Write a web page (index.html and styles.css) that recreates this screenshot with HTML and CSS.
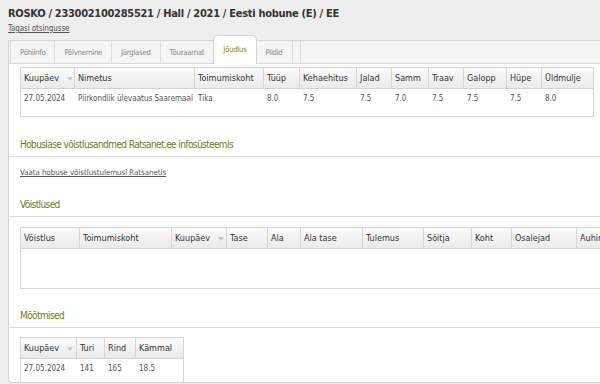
FILE: index.html
```html
<!DOCTYPE html>
<html lang="et">
<head>
  <meta charset="UTF-8">
  <title>ROSKO - Jõudlus</title>
  <link rel="stylesheet" href="styles.css">
</head>
<body>
  <header class="page-head">
    <h1>ROSKO / 233002100285521 / Hall / 2021 / Eesti hobune (E) / EE</h1>
    <a href="#" class="back">Tagasi otsingusse</a>
  </header>

  <div class="tabs-box">
    <ul class="tabs">
      <li>Põhiinfo</li>
      <li>Põlvnemine</li>
      <li>Järglased</li>
      <li>Tõuraamat</li>
      <li class="active">Jõudlus</li>
      <li>Pildid</li>
      <li class="blank"></li>
    </ul>

    <div class="panel">
      <div class="grid grid-score">
        <table>
          <thead>
            <tr>
              <th>Kuupäev <span class="sort"></span></th>
              <th>Nimetus</th>
              <th>Toimumiskoht</th>
              <th>Tüüp</th>
              <th>Kehaehitus</th>
              <th>Jalad</th>
              <th>Samm</th>
              <th>Traav</th>
              <th>Galopp</th>
              <th>Hüpe</th>
              <th>Üldmulje</th>
            </tr>
          </thead>
          <tbody>
            <tr>
              <td>27.05.2024</td>
              <td>Piirkondlik ülevaatus Saaremaal</td>
              <td>Tika</td>
              <td>8.0</td>
              <td>7.5</td>
              <td>7.5</td>
              <td>7.0</td>
              <td>7.5</td>
              <td>7.5</td>
              <td>7.5</td>
              <td>8.0</td>
            </tr>
          </tbody>
        </table>
      </div>

      <h2 class="section">Hobuslase võistlusandmed Ratsanet.ee infosüsteemis</h2>
      <p class="ext"><a href="#">Vaata hobuse võistlustulemusi Ratsanetis</a></p>

      <h2 class="section">Võistlused</h2>
      <div class="grid grid-races">
        <table>
          <thead>
            <tr>
              <th>Võistlus</th>
              <th>Toimumiskoht</th>
              <th>Kuupäev <span class="sort"></span></th>
              <th>Tase</th>
              <th>Ala</th>
              <th>Ala tase</th>
              <th>Tulemus</th>
              <th>Sõitja</th>
              <th>Koht</th>
              <th>Osalejad</th>
              <th>Auhinnad</th>
            </tr>
          </thead>
        </table>
      </div>

      <h2 class="section">Mõõtmised</h2>
      <div class="grid grid-measure">
        <table>
          <thead>
            <tr>
              <th>Kuupäev <span class="sort"></span></th>
              <th>Turi</th>
              <th>Rind</th>
              <th>Kämmal</th>
            </tr>
          </thead>
          <tbody>
            <tr>
              <td>27.05.2024</td>
              <td>141</td>
              <td>165</td>
              <td>18.5</td>
            </tr>
          </tbody>
        </table>
      </div>
    </div>
  </div>
</body>
</html>
```

FILE: styles.css
```css
* { box-sizing: border-box; }
html, body { margin: 0; padding: 0; overflow: hidden; }
body { width: 680px; background: #eeeeee; color: #333; font-family: "DejaVu Sans Condensed", "DejaVu Sans", sans-serif; }

.page-head { height: 40px; padding: 6px 8px 0; }
.page-head h1 { margin: 0; font-size: 11px; line-height: 16px; font-weight: bold; letter-spacing: -0.3px; color: #333; }
.back { display: block; width: max-content; margin-top: 2px; font-size: 8px; line-height: 10px; letter-spacing: -0.1px; color: #555; }

.tabs-box { margin-left: 8px; background: #fff; border: 1px solid #d4d4d4; border-right: none; border-radius: 0 0 0 5px; }
.tabs { display: flex; align-items: flex-end; height: 23px; margin: 0; padding: 0 0 0 1px; list-style: none; background: #f5f5f5; border-bottom: 1px solid #d8d8d8; }
.tabs li { display: flex; align-items: center; height: 22px; padding: 0 9px; border-right: 1px solid #dcdcdc; font-size: 7.8px; letter-spacing: -0.3px; color: #888; }
.tabs li:first-child { border-left: 1px solid #dcdcdc; }
.tabs li.active { height: 29px; margin: 0 0 -1px -1px; padding-bottom: 2px; background: #fff; border: 1px solid #d4d4d4; border-bottom: none; border-radius: 5px 5px 0 0; color: #8b8d2b; }
.tabs li.blank { width: 8px; padding: 0; }

.grid { margin: 3px 0 0 11px; background: #fff; border: 1px solid #d6d6d6; overflow: hidden; }
.grid table { border-collapse: separate; border-spacing: 0; table-layout: fixed; }
.grid th { height: 21px; padding: 0 3px; text-align: left; font-weight: normal; font-size: 9px; color: #333; background: linear-gradient(#fbfbfb, #eaeaea); border-right: 1px solid #d6d6d6; border-bottom: 1px solid #d2d2d2; white-space: nowrap; overflow: hidden; }
.grid th:last-child { border-right: none; }
.grid td { height: 19px; padding: 0 3px; font-size: 8px; color: #555; white-space: nowrap; overflow: hidden; }
.sort { display: inline-block; margin-left: 5px; vertical-align: middle; border-left: 3px solid transparent; border-right: 3px solid transparent; border-top: 4px solid #c8c8c8; }

.grid-score { width: 574px; height: 50px; }
.grid-score table { width: 572px; }
.grid-score th:nth-child(1) { width: 54px; }
.grid-score th:nth-child(2) { width: 120px; }
.grid-score th:nth-child(3) { width: 69px; }
.grid-score th:nth-child(4) { width: 36px; }
.grid-score th:nth-child(5) { width: 57px; }
.grid-score th:nth-child(6) { width: 35px; }
.grid-score th:nth-child(7) { width: 37px; }
.grid-score th:nth-child(8) { width: 35px; }
.grid-score th:nth-child(9) { width: 43px; }
.grid-score th:nth-child(10) { width: 35px; }
.grid-score th:nth-child(11) { width: 51px; }

.grid-races { width: 640px; height: 62px; margin-top: 10px; }
.grid-races table { width: 626px; }
.grid-races th:nth-child(1) { width: 59px; }
.grid-races th:nth-child(2) { width: 92px; }
.grid-races th:nth-child(3) { width: 55px; }
.grid-races th:nth-child(4) { width: 41px; }
.grid-races th:nth-child(5) { width: 33px; }
.grid-races th:nth-child(6) { width: 62px; }
.grid-races th:nth-child(7) { width: 61px; }
.grid-races th:nth-child(8) { width: 48px; }
.grid-races th:nth-child(9) { width: 40px; }
.grid-races th:nth-child(10) { width: 65px; }
.grid-races th:nth-child(11) { width: 70px; }

.grid-measure { width: 164px; height: 45px; margin-top: 9px; border-bottom: none; }
.grid-measure table { width: 162px; }
.grid-measure th:nth-child(1) { width: 56px; }
.grid-measure th:nth-child(2) { width: 28px; }
.grid-measure th:nth-child(3) { width: 31px; }
.grid-measure th:nth-child(4) { width: 47px; }

.section { margin: 0; padding: 20px 11px 4px; border-bottom: 1px solid #dcdcdc; font-size: 10px; line-height: 14px; letter-spacing: -0.6px; font-weight: normal; color: #6e7a23; }
.section:first-of-type { padding-top: 21px; }
.ext { margin: 0; padding: 10px 11px 0; font-size: 7.8px; line-height: 11px; }
.ext a { color: #555; }
```
